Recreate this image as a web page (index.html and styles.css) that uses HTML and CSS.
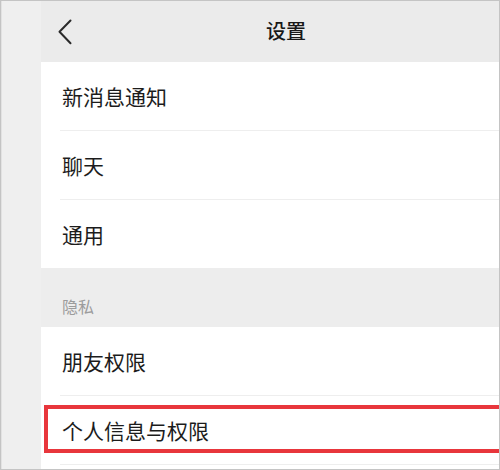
FILE: index.html
```html
<!DOCTYPE html>
<html lang="zh-CN">
<head>
<meta charset="utf-8">
<title>设置</title>
<link rel="stylesheet" href="styles.css">
</head>
<body>
<div class="frame">
  <div class="side"></div>
  <div class="main">
    <div class="header">
      <svg class="back" width="14" height="26" viewBox="0 0 14 26"><path d="M12.5 1.5 L1.5 12.8 L12.5 24.2" fill="none" stroke="#2a2a2a" stroke-width="2" stroke-linecap="round" stroke-linejoin="round"/></svg>
      <div class="title">设置</div>
    </div>
    <div class="group">
      <div class="item"><div class="item-inner">新消息通知</div></div>
      <div class="item"><div class="item-inner">聊天</div></div>
      <div class="item"><div class="item-inner no-line">通用</div></div>
    </div>
    <div class="section">隐私</div>
    <div class="group">
      <div class="item"><div class="item-inner">朋友权限</div></div>
      <div class="item highlighted"><div class="item-inner">个人信息与权限</div><div class="mark"></div></div>
    </div>
  </div>
</div>
</body>
</html>
```
FILE: styles.css
```css
html, body {
  margin: 0;
  padding: 0;
  background: #ffffff;
}
body {
  font-family: "Noto Sans CJK SC", "Noto Sans", sans-serif;
  color: #1a1a1a;
}
.frame {
  width: 500px;
  height: 470px;
  box-sizing: border-box;
  border: 1px solid #c4c4c4;
  display: flex;
  overflow: hidden;
}
.side {
  width: 40px;
  flex: none;
  background: #efefef;
  border-left: 1px solid #e2e2e2;
  box-sizing: border-box;
}
.main {
  flex: 1;
  background: #ffffff;
  overflow: hidden;
  position: relative;
}
.header {
  height: 61px;
  background: #ebebeb;
  display: flex;
  align-items: center;
}
.back {
  margin-left: 17px;
  flex: none;
}
.title {
  margin-left: 194px;
  font-size: 20px;
  font-weight: 500;
  color: #181818;
  margin-top: -2px;
}
.group {
  background: #ffffff;
}
.item {
  padding-left: 19px;
  position: relative;
}
.item-inner {
  height: 68px;
  border-bottom: 1px solid #eeeeee;
  padding-left: 2px;
  display: flex;
  align-items: center;
  font-size: 21px;
  color: #1c1c1c;
}
.item-inner.no-line {
  border-bottom: none;
}
.section {
  height: 59px;
  background: #ededed;
  box-sizing: border-box;
  padding-left: 21px;
  padding-top: 26px;
  font-size: 16px;
  color: #9c9c9c;
}
.mark {
  position: absolute;
  left: 3px;
  right: -10px;
  top: 9px;
  height: 48px;
  box-sizing: border-box;
  border: 4.5px solid #e8363c;
}
```
